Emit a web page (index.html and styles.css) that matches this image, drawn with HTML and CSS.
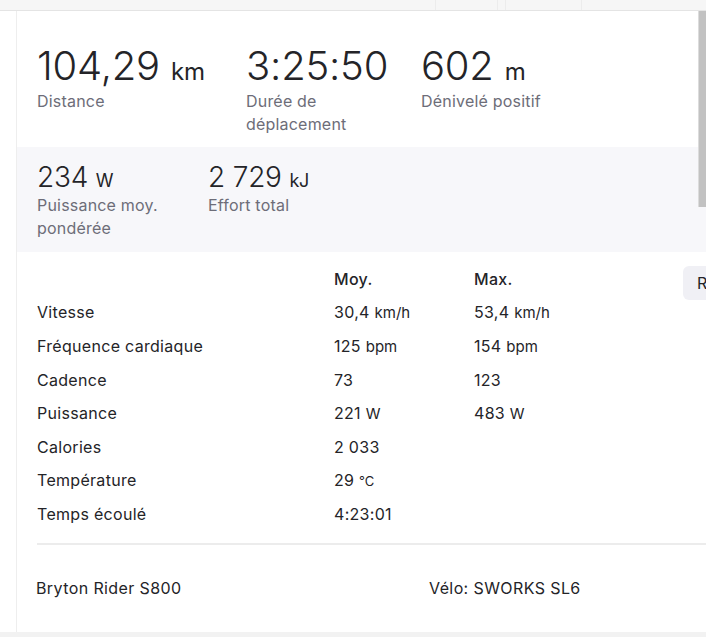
FILE: index.html
```html
<!DOCTYPE html>
<html lang="fr">
<head>
<meta charset="utf-8">
<title>Activité</title>
<link rel="stylesheet" href="styles.css">
</head>
<body>
<div class="topbar">
  <span class="tb-seg tb-a"></span>
  <span class="tb-seg tb-b"></span>
  <span class="tb-seg tb-c"></span>
  <span class="tb-seg tb-d"></span>
</div>
<div class="layout">
  <div class="side"></div>
  <main class="card">
    <section class="stats primary">
      <div class="stat s1">
        <div class="value big">104,29 <abbr class="unit">km</abbr></div>
        <div class="label">Distance</div>
      </div>
      <div class="stat s2">
        <div class="value big">3:25:50</div>
        <div class="label">Durée de déplacement</div>
      </div>
      <div class="stat s3">
        <div class="value big">602 <abbr class="unit">m</abbr></div>
        <div class="label">Dénivelé positif</div>
      </div>
    </section>
    <section class="stats secondary">
      <div class="stat t1">
        <div class="value mid">234 <abbr class="unit">W</abbr></div>
        <div class="label">Puissance moy. pondérée</div>
      </div>
      <div class="stat t2">
        <div class="value mid">2 729 <abbr class="unit">kJ</abbr></div>
        <div class="label">Effort total</div>
      </div>
    </section>
    <section class="more">
      <div class="grid">
        <div class="th"></div><div class="th">Moy.</div><div class="th">Max.</div>
        <div>Vitesse</div><div>30,4 <span class="u">km/h</span></div><div>53,4 <span class="u">km/h</span></div>
        <div>Fréquence cardiaque</div><div>125 <span class="u">bpm</span></div><div>154 <span class="u">bpm</span></div>
        <div>Cadence</div><div>73</div><div>123</div>
        <div>Puissance</div><div>221 <span class="u">W</span></div><div>483 <span class="u">W</span></div>
        <div>Calories</div><div>2 033</div><div></div>
        <div>Température</div><div>29 <span class="u deg">℃</span></div><div></div>
        <div>Temps écoulé</div><div>4:23:01</div><div></div>
      </div>
      <button class="rbtn" type="button">R</button>
    </section>
    <hr class="divider">
    <footer class="device">
      <span class="dev-name">Bryton Rider S800</span>
      <span class="bike">Vélo: SWORKS SL6</span>
    </footer>
  </main>
</div>
<div class="bottombar"></div>
<div class="scroll-thumb"></div>
</body>
</html>
```
FILE: styles.css
```css
html, body {
  margin: 0;
  padding: 0;
  background: #ffffff;
  overflow: hidden;
}
body {
  font-family: Inter, "Noto Sans", "Liberation Sans", sans-serif;
  color: #242428;
  width: 706px;
  height: 637px;
  position: relative;
}
.topbar {
  height: 10px;
  background: #f6f6f6;
  border-bottom: 1px solid #e4e4e4;
  display: flex;
}
.tb-seg { display: block; height: 10px; border-right: 1px solid #ececec; }
.tb-a { width: 435px; }
.tb-b { width: 61px; }
.tb-c { width: 7px; }
.tb-d { width: 75px; }
.layout {
  display: flex;
  height: 621px;
}
.side {
  width: 16px;
  flex: none;
}
.card {
  flex: none;
  width: 760px;
  border-left: 1px solid #eeeeee;
}
.stats {
  display: flex;
  padding-left: 20px;
}
.primary {
  padding-top: 30px;
  height: 106px;
}
.stat { flex: none; }
.s1 { width: 173px; margin-right: 36px; }
.s2 { width: 139px; margin-right: 36px; }
.s3 { width: 200px; }
.secondary {
  background: #f7f7fa;
  height: 105px;
  box-sizing: border-box;
  padding-top: 13px;
}
.t1 { width: 135px; margin-right: 36px; }
.t2 { width: 200px; }
.value { white-space: nowrap; font-weight: 300; letter-spacing: -0.2px; }
.big { font-size: 40px; line-height: 49px; }
.mid { font-size: 28px; line-height: 34px; }
.unit { text-decoration: none; font-size: 24px; line-height: 1; font-weight: 400; }
.mid .unit { font-size: 18px; }
.label {
  font-size: 16px;
  line-height: 22.5px;
  color: #6d6d78;
  letter-spacing: 0.2px;
}
.more {
  display: flex;
  align-items: flex-start;
  padding-left: 20px;
  padding-top: 10px;
}
.grid {
  width: 646px;
  display: grid;
  grid-template-columns: 297px 140px 1fr;
  grid-auto-rows: 33.6px;
  align-items: center;
  font-size: 16px;
  letter-spacing: 0.3px;
}
.th { font-weight: 500; }
.u { font-size: 15px; letter-spacing: 0; }
.deg { font-size: 13px; }
.rbtn {
  flex: none;
  width: 44px;
  height: 34px;
  margin-top: 4px;
  border: none;
  border-radius: 6px;
  background: #f0f0f5;
  font-family: inherit;
  font-size: 16px;
  color: #242428;
  text-align: left;
  padding-left: 14px;
}
.divider {
  margin: 12px 0 0 20px;
  border: none;
  border-top: 2px solid #ececec;
  width: 700px;
}
.device {
  display: flex;
  padding-left: 19px;
  padding-top: 32px;
  font-size: 16px;
  line-height: 22px;
  letter-spacing: 0.4px;
}
.dev-name { width: 393px; }
.bottombar {
  position: absolute;
  left: 0;
  top: 632px;
  width: 706px;
  height: 5px;
  background: #f2f2f2;
}
.scroll-thumb {
  position: absolute;
  left: 698px;
  top: 11px;
  width: 8px;
  height: 196px;
  background: #c2c2c2;
  border-left: 1px solid #dcdcdc;
  box-sizing: border-box;
}
```
